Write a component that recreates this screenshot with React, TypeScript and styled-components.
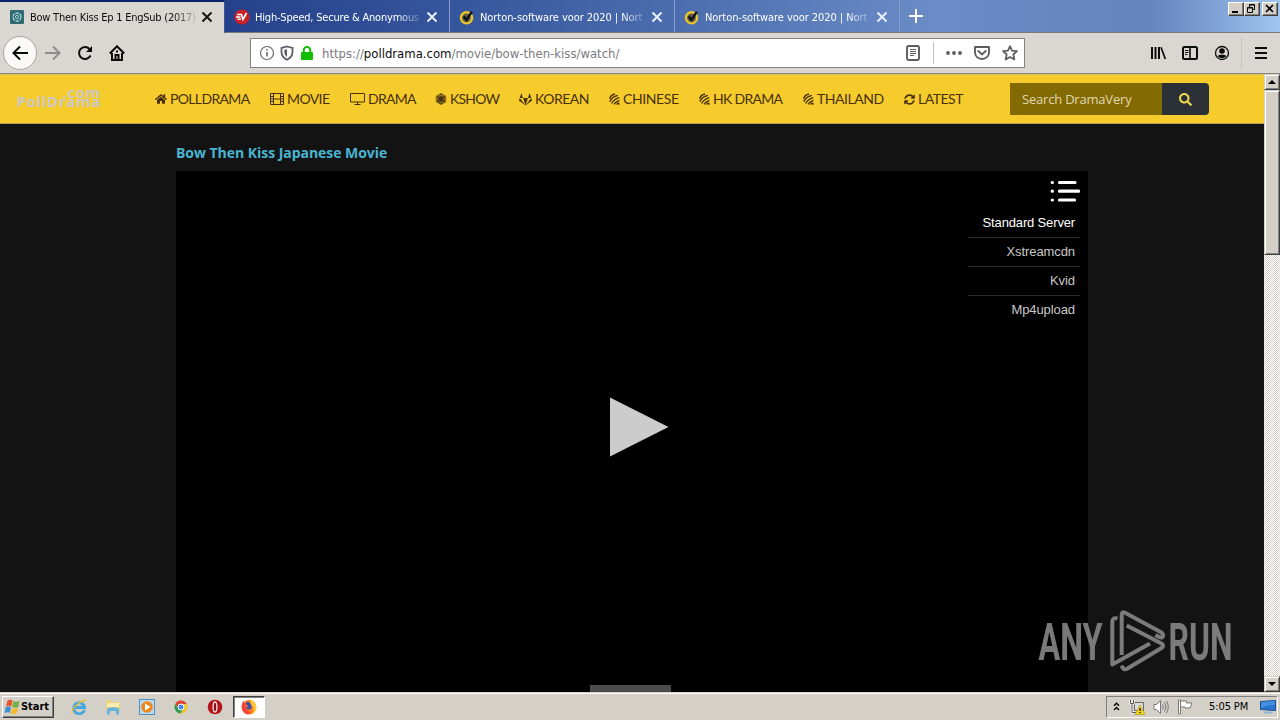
import React from 'react';
import styled, { createGlobalStyle } from 'styled-components';
import { FaHome, FaFirstOrder, FaGitlab, FaSyncAlt, FaSearch } from 'react-icons/fa';

const GlobalStyle = createGlobalStyle`
  * { box-sizing: border-box; }
  body { margin: 0; overflow: hidden; }
  svg { display: block; flex: none; }
`;

const ui = `'DejaVu Sans Condensed', 'DejaVu Sans', sans-serif`;

const Screen = styled.div`
  width: 1280px;
  height: 720px;
  display: flex;
  flex-direction: column;
  overflow: hidden;
  font-family: ${ui};
  background: #d4d0c8;
`;

const TabBar = styled.div`
  height: 33px;
  flex: none;
  display: flex;
  background: linear-gradient(90deg, #0a246a 0, #25418b 230px, #35559c 450px, #4e70b0 700px, #6a8bc6 930px, #6684bd 1150px, #7d9fd3 1210px, #a0c6f0 1280px);
  border-bottom: 1px solid #7a7a7c;
`;

const Tab = styled.div<{ $active?: boolean }>`
  width: 225px;
  height: ${p => (p.$active ? 33 : 32)}px;
  flex: none;
  display: flex;
  align-items: center;
  padding: ${p => (p.$active ? '0 10px 1px 9px' : '2px 10px 0 9px')};
  color: ${p => (p.$active ? '#0c0c0d' : '#fff')};
  background: ${p => (p.$active ? '#dad6d1' : 'transparent')};
  border-top: ${p => (p.$active ? '2px solid #0a246a' : '0')};
  border-right: 1px solid ${p => (p.$active ? '#3c5594' : '#8b9fcb')};
`;

const TabTitle = styled.span<{ $track: number }>`
  width: 167px;
  margin-left: 5px;
  margin-right: 4px;
  overflow: hidden;
  white-space: nowrap;
  font-size: 11px;
  letter-spacing: ${p => p.$track}px;
  mask-image: linear-gradient(90deg, #000 142px, transparent 170px);
`;

const NewTab = styled.div`
  padding: 8px 0 0 8px;
`;

const WindowButtons = styled.div`
  margin-left: auto;
  padding: 2px 2px 0 0;
  display: flex;
`;

const WindowButton = styled.div<{ $gap?: boolean }>`
  width: 16px;
  height: 14px;
  margin-left: ${p => (p.$gap ? 2 : 0)}px;
  background: #d4d0c8;
  border: 1px solid;
  border-color: #fff #404040 #404040 #fff;
  box-shadow: inset -1px -1px #808080;
`;

const Toolbar = styled.div`
  height: 41px;
  flex: none;
  display: flex;
  align-items: center;
  background: #dad6d1;
  border-bottom: 1px solid #87837e;
  padding: 0 11px 0 3px;
`;

const BackButton = styled.div`
  width: 34px;
  height: 34px;
  border-radius: 50%;
  background: #faf9f8;
  border: 1px solid #aaa6a1;
  display: flex;
  align-items: center;
  justify-content: center;
`;

const NavIcons = styled.div`
  display: flex;
  gap: 16px;
  margin-left: 8px;
  width: 205px;
`;

const UrlBar = styled.div`
  width: 775px;
  height: 30px;
  background: #fff;
  border: 1px solid #85827f;
  display: flex;
  align-items: center;
  padding: 0 6px 0 8px;
  gap: 4px;
`;

const Url = styled.span`
  font-size: 13px;
  color: #7a7a7e;
  margin-left: 3px;
  letter-spacing: -0.01px;
  white-space: nowrap;
  flex: 1;
  b { font-weight: 400; color: #0c0c0d; }
`;

const UrlDivider = styled.div<{ $tall?: boolean }>`
  width: 1px;
  height: ${p => (p.$tall ? 32 : 22)}px;
  background: #c5c2be;
  margin: ${p => (p.$tall ? '0 -5px 0 -5px' : '0 8px 0 8px')};
`;

const UrlActions = styled.div`
  display: flex;
  gap: 12px;
`;

const ToolIcons = styled.div`
  margin-left: auto;
  display: flex;
  align-items: center;
  gap: 16px;
`;

const Viewport = styled.div`
  height: 618px;
  flex: none;
  display: flex;
`;

const Page = styled.main`
  width: 1264px;
  height: 618px;
  background: #131313;
  overflow: hidden;
`;

const Header = styled.header`
  height: 50px;
  background: #f5cc2b;
  border-top: 1px solid #dcc463;
  border-bottom: 1px solid #b5a157;
  display: flex;
  align-items: center;
`;

const Logo = styled.div`
  width: 85px;
  margin-left: 16px;
  padding-bottom: 5px;
  display: flex;
  flex-direction: column;
  align-items: flex-end;
  font: 700 15px/9px 'Open Sans', sans-serif;
  color: #cdc8c8;
  letter-spacing: 0.65px;
`;

const Menu = styled.nav`
  display: flex;
  margin-left: 54px;
  width: 855px;
  color: #48300c;
`;

const MenuItem = styled.a<{ $w: number; $track: number }>`
  width: ${p => p.$w}px;
  display: flex;
  align-items: center;
  gap: 3px;
  font: 400 14px/20px Lato, sans-serif;
  letter-spacing: ${p => p.$track}px;
  white-space: nowrap;
`;

const Search = styled.div`
  display: flex;
  height: 32px;
  width: 199px;
  border-radius: 0 4px 4px 0;
  overflow: hidden;
`;

const SearchInput = styled.div`
  width: 152px;
  padding-left: 12px;
  background: #846a02;
  color: #e0d9b4;
  font: 400 13px/33px 'Open Sans', sans-serif;
  letter-spacing: -0.2px;
`;

const SearchButton = styled.div`
  flex: 1;
  display: flex;
  align-items: center;
  justify-content: center;
  background: #2b3037;
  color: #f0d84c;
`;

const Title = styled.h1`
  margin: 0;
  height: 47px;
  padding: 19px 0 0 176px;
  font: 700 14px/20px 'Open Sans', sans-serif;
  letter-spacing: -0.04px;
  color: #49b5d1;
`;

const Player = styled.section`
  width: 912px;
  height: 521px;
  margin-left: 176px;
  background: #000;
  display: flex;
  flex-direction: column;
`;

const Servers = styled.div`
  width: 112px;
  height: 153px;
  margin: 0 8px 0 auto;
  padding-top: 7px;
  display: flex;
  flex-direction: column;
  align-items: flex-end;
`;

const ServerList = styled.div`
  margin-top: 4px;
`;

const Server = styled.div<{ $active?: boolean }>`
  width: 112px;
  height: 29px;
  padding-right: 5px;
  text-align: right;
  font: 400 13px/28px 'Liberation Sans', Arial, sans-serif;
  letter-spacing: ${p => (p.$active ? -0.15 : -0.08)}px;
  color: ${p => (p.$active ? '#fff' : '#c8c8c8')};
  border-bottom: 1px solid #2a2a2a;
  &:last-child { border-bottom: 0; }
`;

const Play = styled.div`
  margin: 73px 0 0 433px;
`;

const PlayerTab = styled.div`
  width: 81px;
  height: 7px;
  margin: auto 0 0 414px;
  background: #4b4b4b;
`;

const Scrollbar = styled.div`
  width: 16px;
  display: flex;
  flex-direction: column;
  background: repeating-conic-gradient(#fff 0 25%, #d4d0c8 0 50%) 0 0 / 2px 2px;
`;

const Raised = styled.div<{ $h: number }>`
  height: ${p => p.$h}px;
  flex: none;
  background: #d4d0c8;
  border: 1px solid;
  border-color: #d4d0c8 #404040 #404040 #d4d0c8;
  box-shadow: inset 1px 1px #fff, inset -1px -1px #808080;
  display: flex;
  align-items: center;
  justify-content: center;
`;

const ScrollSpace = styled.div`
  flex: 1;
`;

const Taskbar = styled.footer`
  height: 28px;
  flex: none;
  display: flex;
  align-items: center;
  background: #d4d0c8;
  border-top: 1px solid #d4d0c8;
  box-shadow: inset 0 1px #fff;
  padding: 0 2px;
`;

const Start = styled.div`
  width: 52px;
  height: 22px;
  display: flex;
  align-items: center;
  gap: 1px;
  padding-left: 1px;
  border: 1px solid;
  border-color: #fff #404040 #404040 #fff;
  box-shadow: inset -1px -1px #808080;
  font: 700 11px ${ui};
  letter-spacing: -0.05px;
  color: #000;
`;

const Launchers = styled.div`
  display: flex;
  align-items: center;
  gap: 18px;
  margin-left: 17px;
`;

const ActiveTask = styled.div`
  width: 32px;
  height: 22px;
  margin-left: 10px;
  display: flex;
  align-items: center;
  justify-content: center;
  background: #fff;
  border: 1px solid;
  border-color: #404040 #fff #fff #404040;
  box-shadow: inset 1px 1px #808080;
`;

const Tray = styled.div`
  width: 172px;
  height: 22px;
  margin-left: auto;
  display: flex;
  align-items: center;
  padding-left: 5px;
  border: 1px solid;
  border-color: #808080 #fff #fff #808080;
  font-size: 11px;
  color: #000;
`;

const TrayIcons = styled.div`
  display: flex;
  align-items: center;
  gap: 8px;
`;

const Clock = styled.span`
  width: 42px;
  margin: 0 9px 0 16px;
  white-space: nowrap;
  letter-spacing: -0.1px;
`;

const Watermark = styled.div`
  position: absolute;
  left: 1036px;
  top: 606px;
  opacity: 0.88;
`;

const Close = ({ c }: { c: string }) => (
  <svg width="12" height="12" viewBox="0 0 12 12" stroke={c} strokeWidth="1.9">
    <path d="M1.5 1.5l9 9M10.5 1.5l-9 9" />
  </svg>
);

const DramaFavicon = () => (
  <svg width="16" height="16" viewBox="0 0 16 16" fill="none">
    <rect x="1" y="1" width="14" height="14" rx="1" fill="#2e6b72" />
    <circle cx="8" cy="8" r="4" stroke="#a9d3d5" strokeWidth="1.3" strokeDasharray="3.4 .8" />
    <circle cx="8" cy="8" r="1.6" stroke="#a9d3d5" />
  </svg>
);

const VpnFavicon = () => (
  <svg width="16" height="16" viewBox="0 0 16 16" fill="none">
    <circle cx="8" cy="8" r="7.6" fill="#cc2027" />
    <path d="M3 5.500h4.500l1.500 5L12.500 4M2 8h4.500M3.500 10.300H7" stroke="#fff" strokeWidth="1.600" />
  </svg>
);

const NortonFavicon = () => (
  <svg width="16" height="16" viewBox="0 0 16 16" fill="none">
    <circle cx="7.5" cy="8.800" r="5.600" fill="#5d5c4a" stroke="#e8c52d" strokeWidth="2.400" />
    <path d="M4.600 7.400l2.900 3.400 5.300-8" stroke="#0b0e17" strokeWidth="2.300" />
  </svg>
);

const Film = () => (
  <svg width="14" height="12" viewBox="0 0 14 12" fill="none" stroke="currentColor">
    <path d="M.5 .5h13v11H.5zM3.500 .5v11M10.500 .5v11M3.500 6h7M.5 3.500h3M.5 6h3M.5 8.500h3M10.500 3.500h3M10.500 6h3M10.500 8.500h3" />
  </svg>
);

const Monitor = () => (
  <svg width="15" height="12" viewBox="0 0 15 12" fill="none" stroke="currentColor">
    <path d="M.5 .5h14v8.500H.5zM7.500 9v2M4.500 11.500h6" />
  </svg>
);

const Stripes = () => (
  <svg width="11" height="12" viewBox="0 0 11 12" fill="none" stroke="currentColor" strokeWidth="1.300">
    <path d="M.7 5.800Q1.500 1.800 6 1M.8 8.800Q2.500 4 8.800 2.300M2.600 10.600Q4.500 6.300 10.300 4.600M5 11.400Q6.500 8.500 10.500 7.300M7.500 11.500l1.500-1.500 1.500 1.500" />
  </svg>
);

const menu = [
  { label: 'POLLDRAMA', w: 115, track: -0.65, icon: <FaHome size={12} /> },
  { label: 'MOVIE', w: 80, track: -0.6, icon: <Film /> },
  { label: 'DRAMA', w: 85, track: -0.7, icon: <Monitor /> },
  { label: 'KSHOW', w: 84, track: -0.8, icon: <FaFirstOrder size={12} /> },
  { label: 'KOREAN', w: 90, track: -0.5, icon: <FaGitlab size={13} /> },
  { label: 'CHINESE', w: 90, track: -0.4, icon: <Stripes /> },
  { label: 'HK DRAMA', w: 104, track: -0.7, icon: <Stripes /> },
  { label: 'THAILAND', w: 101, track: -0.45, icon: <Stripes /> },
  { label: 'LATEST', w: 80, track: -0.5, icon: <FaSyncAlt size={11} /> },
];

export default function App() {
  return (
    <Screen>
      <GlobalStyle />
      <TabBar>
        <Tab $active>
          <DramaFavicon />
          <TabTitle $track={-0.24}>Bow Then Kiss Ep 1 EngSub (2017)</TabTitle>
          <Close c="#111" />
        </Tab>
        <Tab>
          <VpnFavicon />
          <TabTitle $track={-0.2}>High-Speed, Secure &amp; Anonymous</TabTitle>
          <Close c="#e9f2ff" />
        </Tab>
        {[0, 1].map(i => (
          <Tab key={i}>
            <NortonFavicon />
            <TabTitle $track={-0.06}>Norton-software voor 2020 | Nort</TabTitle>
            <Close c="#e9f2ff" />
          </Tab>
        ))}
        <NewTab>
          <svg width="16" height="16" viewBox="0 0 16 16" stroke="#fff" strokeWidth="2"><path d="M8 1v14M1 8h14" /></svg>
        </NewTab>
        <WindowButtons>
          <WindowButton>
            <svg width="14" height="12" viewBox="0 0 14 12"><path d="M3 8h6v2H3z" /></svg>
          </WindowButton>
          <WindowButton>
            <svg width="14" height="12" viewBox="0 0 14 12" fill="none" stroke="#000"><path d="M4.500 4V1.500h5v5H8M4.500 2h5M2.500 4.500h5v5h-5zM2.500 5h5" /></svg>
          </WindowButton>
          <WindowButton $gap>
            <svg width="14" height="12" viewBox="0 0 14 12" stroke="#000" strokeWidth="1.600"><path d="M3 2l7 7M10 2L3 9" /></svg>
          </WindowButton>
        </WindowButtons>
      </TabBar>

      <Toolbar>
        <BackButton>
          <svg width="16" height="16" viewBox="0 0 16 16" fill="none" stroke="#0c0c0d" strokeWidth="2"><path d="M16 8H1.500M8 1.500L1.500 8 8 14.500" /></svg>
        </BackButton>
        <NavIcons>
          <svg width="16" height="16" viewBox="0 0 16 16" fill="none" stroke="#8f8d8b" strokeWidth="1.900"><path d="M0 8h14.500M8 1.500L14.500 8 8 14.500" /></svg>
          <svg width="16" height="16" viewBox="0 0 16 16" fill="none" stroke="#0c0c0d" strokeWidth="2"><path d="M13.500 10.500a6 6 0 1 1-1-6.500" /><path d="M15 1v6H9z" fill="#0c0c0d" stroke="none" /></svg>
          <svg width="16" height="16" viewBox="0 0 16 16" fill="none" stroke="#0c0c0d" strokeWidth="2"><path d="M.8 8.500L8 1.300l7.200 7.200M3 8v7h10V8" /><path d="M6.500 15v-5h3v5M8 5.500v2" strokeWidth="2" /></svg>
        </NavIcons>
        <UrlBar>
          <svg width="16" height="16" viewBox="0 0 16 16" fill="none" stroke="#6b6b70"><circle cx="8" cy="8" r="6.500" strokeWidth="1.200" /><path d="M8 7v4.500M8 4v1.500" strokeWidth="1.600" /></svg>
          <svg width="16" height="16" viewBox="0 0 16 16" fill="none" stroke="#5d5d68" strokeWidth="1.800"><path d="M8 1.500L13.500 3v4c0 3.500-2 6-5.500 7.700C4.500 13 2.500 10.500 2.500 7V3z" /><path d="M8 4.200L5.300 5v2c0 2 1 3.700 2.700 4.900z" fill="#5d5d68" stroke="none" /></svg>
          <svg width="16" height="16" viewBox="0 0 16 16" fill="none"><rect x="2" y="7" width="12" height="8" rx="1" fill="#12bc00" /><path d="M4.700 8V5.200a3.300 3.300 0 0 1 6.600 0V8" stroke="#12bc00" strokeWidth="2" /></svg>
          <Url>https://<b>polldrama.com</b>/movie/bow-then-kiss/watch/</Url>
          <svg width="16" height="16" viewBox="0 0 16 16" fill="none" stroke="#5c5c61"><rect x="2" y="1" width="12" height="14" rx="1.500" strokeWidth="1.900" /><path d="M5 4.500h6M5 6.500h6M5 8.500h6M5 10.500h4" /></svg>
          <UrlDivider />
          <UrlActions>
            <svg width="16" height="16" viewBox="0 0 16 16" fill="#5c5c61"><circle cx="2" cy="8" r="1.900" /><circle cx="8" cy="8" r="1.900" /><circle cx="14" cy="8" r="1.900" /></svg>
            <svg width="16" height="16" viewBox="0 0 16 16" fill="none" stroke="#5c5c61" strokeWidth="1.900"><path d="M1 2h14v5.500a7 6.500 0 0 1-14 0z" strokeLinejoin="round" /><path d="M4.300 6L8 9.500 11.700 6" strokeLinecap="round" /></svg>
            <svg width="16" height="16" viewBox="0 0 16 16" fill="none" stroke="#5c5c61" strokeWidth="1.700" strokeLinejoin="round"><path d="M8 1.200l2 4.500 5 .5-3.700 3.300 1.100 5L8 11.900l-4.400 2.600 1.100-5L1 6.200l5-.5z" /></svg>
          </UrlActions>
        </UrlBar>
        <ToolIcons>
          <svg width="16" height="16" viewBox="0 0 16 16" stroke="#0c0c0d" strokeWidth="2"><path d="M2 2v12M5.500 2v12M9 2v12" /><path d="M11 2.300L15.300 14" strokeWidth="1.700" /></svg>
          <svg width="16" height="16" viewBox="0 0 16 16" fill="none" stroke="#0c0c0d"><rect x="1" y="2" width="14" height="12" rx="1.500" strokeWidth="2" /><path d="M8 2v12" strokeWidth="1.600" /><path d="M3 5.500h3.500M3 7.500h3.500M3 9.500h2.500" /></svg>
          <svg width="16" height="16" viewBox="0 0 16 16" fill="none" stroke="#0c0c0d"><circle cx="8" cy="8" r="6.500" strokeWidth="1.300" /><circle cx="8" cy="6" r="2.800" fill="#0c0c0d" stroke="none" /><path d="M3.700 11c1-1.800 7.600-1.800 8.600 0-1.700 2.700-6.900 2.700-8.600 0z" fill="#0c0c0d" stroke="none" /></svg>
          <UrlDivider $tall />
          <svg width="16" height="16" viewBox="0 0 16 16" stroke="#0c0c0d" strokeWidth="2"><path d="M2 3h12M2 8h12M2 13h12" /></svg>
        </ToolIcons>
      </Toolbar>

      <Viewport>
        <Page>
          <Header>
            <Logo>
              <span>.com</span>
              <span>PollDrama</span>
            </Logo>
            <Menu>
              {menu.map(m => (
                <MenuItem key={m.label} $w={m.w} $track={m.track}>
                  {m.icon}
                  {m.label}
                </MenuItem>
              ))}
            </Menu>
            <Search>
              <SearchInput>Search DramaVery</SearchInput>
              <SearchButton><FaSearch size={13} /></SearchButton>
            </Search>
          </Header>
          <Title>Bow Then Kiss Japanese Movie</Title>
          <Player>
            <Servers>
              <svg width="30" height="27" viewBox="0 0 30 27" stroke="#fff" strokeWidth="3.200" strokeLinecap="round">
                <path d="M9.500 4.500h15.500M9.500 13.200h19M9.500 22h15M2.200 4.500h.2M2.200 13.200h.2M2.200 22h.2" />
              </svg>
              <ServerList>
                <Server $active>Standard Server</Server>
                <Server>Xstreamcdn</Server>
                <Server>Kvid</Server>
                <Server>Mp4upload</Server>
              </ServerList>
            </Servers>
            <Play>
              <svg width="60" height="60" viewBox="0 0 60 60"><path d="M1 .5L59.500 30 1 59.500z" fill="#ccc" /></svg>
            </Play>
            <PlayerTab />
          </Player>
        </Page>
        <Scrollbar>
          <Raised $h={16}><svg width="8" height="4" viewBox="0 0 8 4"><path d="M4 0l4 4H0z" /></svg></Raised>
          <Raised $h={165} />
          <ScrollSpace />
          <Raised $h={16}><svg width="8" height="4" viewBox="0 0 8 4"><path d="M0 0h8L4 4z" /></svg></Raised>
        </Scrollbar>
      </Viewport>

      <Taskbar>
        <Start>
          <svg width="16" height="16" viewBox="0 0 16 16">
            <path d="M3.500 1.500Q6 0 8.500 1.500L7.300 7.500Q4.500 6 2 7.500z" fill="#e5562b" />
            <path d="M9.300 2q2.500 1.500 6.200 0l-1.200 6q-3 1.300-6.200 0z" fill="#76b043" />
            <path d="M1.700 8.300Q4 6.800 7 8.300l-1.200 5.700Q3.500 12.500 .5 14z" fill="#3b8ed0" />
            <path d="M8 9q2.500 1.300 6 0l-1.200 5.500q-3 1.300-6 0z" fill="#f5b929" />
          </svg>
          Start
        </Start>
        <Launchers>
          <svg width="16" height="16" viewBox="0 0 16 16" fill="none">
            <path d="M13.500 11A5.500 5.500 0 1 1 13.700 8.500H4" stroke="#45a7e0" strokeWidth="2.800" />
            <path d="M1.500 14.500C-1 11 9 1 15 1.500" stroke="#e7bd38" strokeWidth="1.300" />
          </svg>
          <svg width="16" height="16" viewBox="0 0 16 16">
            <path d="M1 1h5l1 2h8v9H1z" fill="#ecd27b" /><path d="M2 4h12v4H2z" fill="#f9edb5" />
            <path d="M2 15.500V9.500q6-2.500 12 0v6h-3v-3.500H5v3.500z" fill="#67b4dc" />
          </svg>
          <svg width="16" height="16" viewBox="0 0 16 16">
            <rect x=".5" y=".5" width="15" height="15" fill="#b9d9f0" stroke="#4f8fc4" />
            <circle cx="8" cy="8" r="5.800" fill="#f08519" /><path d="M6 4.500L11.500 8 6 11.500z" fill="#fff" />
          </svg>
          <svg width="16" height="16" viewBox="0 0 16 16">
            <circle cx="8" cy="8" r="6.500" fill="#f4c528" />
            <path d="M2.400 4.700A6.500 6.500 0 0 1 13.700 5H8L5.400 9.500z" fill="#db4437" />
            <path d="M2.400 4.700A6.500 6.500 0 0 0 7.500 14.500L10.600 9.500 5.400 9.500z" fill="#2c9d57" />
            <circle cx="8" cy="8" r="3" fill="#4285f4" stroke="#fff" />
          </svg>
          <svg width="16" height="16" viewBox="0 0 16 16">
            <circle cx="8" cy="8" r="7.300" fill="#b5131a" /><ellipse cx="8" cy="8" rx="1.900" ry="5" fill="#8c1014" stroke="#f1e4e4" strokeWidth="1.300" />
          </svg>
        </Launchers>
        <ActiveTask>
          <svg width="16" height="16" viewBox="0 0 16 16">
            <circle cx="8" cy="8.300" r="7.300" fill="#ff7a1c" />
            <path d="M9 .5c4 1 6.500 4.500 6.300 8.500-.5 3-2.500 5.500-5.300 6.300 3-3 3-5 1.500-8C11 5 8.500 4 9 .5z" fill="#ffc933" />
            <path d="M1 5C1.500 3.500 2 2.500 3 2l1 2.500 1 5 4 4.500-2 1.500C2 14.500 0 10 1 5z" fill="#f8403f" />
            <path d="M4.500 4.500C6 2.500 8 2.500 9 4l1.500 3c.8 2-.8 3.700-2.500 3.500C6.500 10.500 5.500 9.500 5.500 8.500L7 7z" fill="#3a50b5" />
          </svg>
        </ActiveTask>
        <Tray>
          <TrayIcons>
            <svg width="9" height="10" viewBox="0 0 9 10" fill="none" stroke="#000" strokeWidth="1.400"><path d="M2 3.800l2.500-2.500L7 3.800M2 8l2.500-2.500L7 8" /></svg>
            <svg width="16" height="16" viewBox="0 0 16 16" fill="none">
              <path d="M5.500 3.500h9v8h-9z" fill="#ddd" stroke="#666" /><path d="M1.500 1v3.500h3V1M3 4.500v9h5" stroke="#fff" strokeWidth="2.200" /><path d="M1.500 1v3.500h3V1M3 4.500v9h5" stroke="#555" />
              <path d="M11 6l5 9.500H6z" fill="#f7d613" stroke="#a58a00" strokeWidth=".5" /><path d="M11 9v3M11 13v1.200" stroke="#000" strokeWidth="1.200" />
            </svg>
            <svg width="16" height="16" viewBox="0 0 16 16" fill="none" stroke="#777"><path d="M1 5.500h2.500l4-4v13l-4-4H1z" fill="#fff" /><path d="M9.500 5.500q1.500 2.500 0 5M11.500 3.500q3 4.500 0 9M13.500 2q3.500 6 0 12" /></svg>
            <svg width="16" height="16" viewBox="0 0 16 16" stroke="#777"><path d="M1.500 1h2v14h-2z" fill="#fff" /><path d="M3.500 2h6v2h5.500l-2 5H8V8H3.500z" fill="#fff" /></svg>
          </TrayIcons>
          <Clock>5:05 PM</Clock>
          <svg width="16" height="14" viewBox="0 0 16 14"><path d="M.5 1.500l15-1v10l-15-1z" fill="#2874cf" stroke="#174c91" /><path d="M1 2l14-1v4Q7 5 1 8z" fill="#4590dd" /><path d="M5 11.500h6l2 2H4z" fill="#8bb4dc" /></svg>
        </Tray>
      </Taskbar>

      <Watermark>
        <svg width="204" height="70" viewBox="0 0 204 70" fill="none">
          <g fill="#8a8a8a" fontFamily="Roboto, sans-serif" fontWeight="700" fontSize="52">
            <text x="2.500" y="53.500" textLength="64" lengthAdjust="spacingAndGlyphs">ANY</text>
            <text x="132.500" y="53.500" textLength="64" lengthAdjust="spacingAndGlyphs">RUN</text>
          </g>
          <path
            d="M81.500 12.500Q76.300 11 76.300 16V58.500L114 37.500M85.700 49V9Q85.700 5 89.500 7L125.500 26.500Q128.500 29 126 31.500Q124 32 119.500 29M90.700 19.500L125.500 37.500Q128.500 39.500 125.500 42L91.500 62.500Q87 65 85.800 59.500"
            stroke="#8a8a8a"
            strokeWidth="4"
            strokeLinejoin="round"
          />
        </svg>
      </Watermark>
    </Screen>
  );
}
